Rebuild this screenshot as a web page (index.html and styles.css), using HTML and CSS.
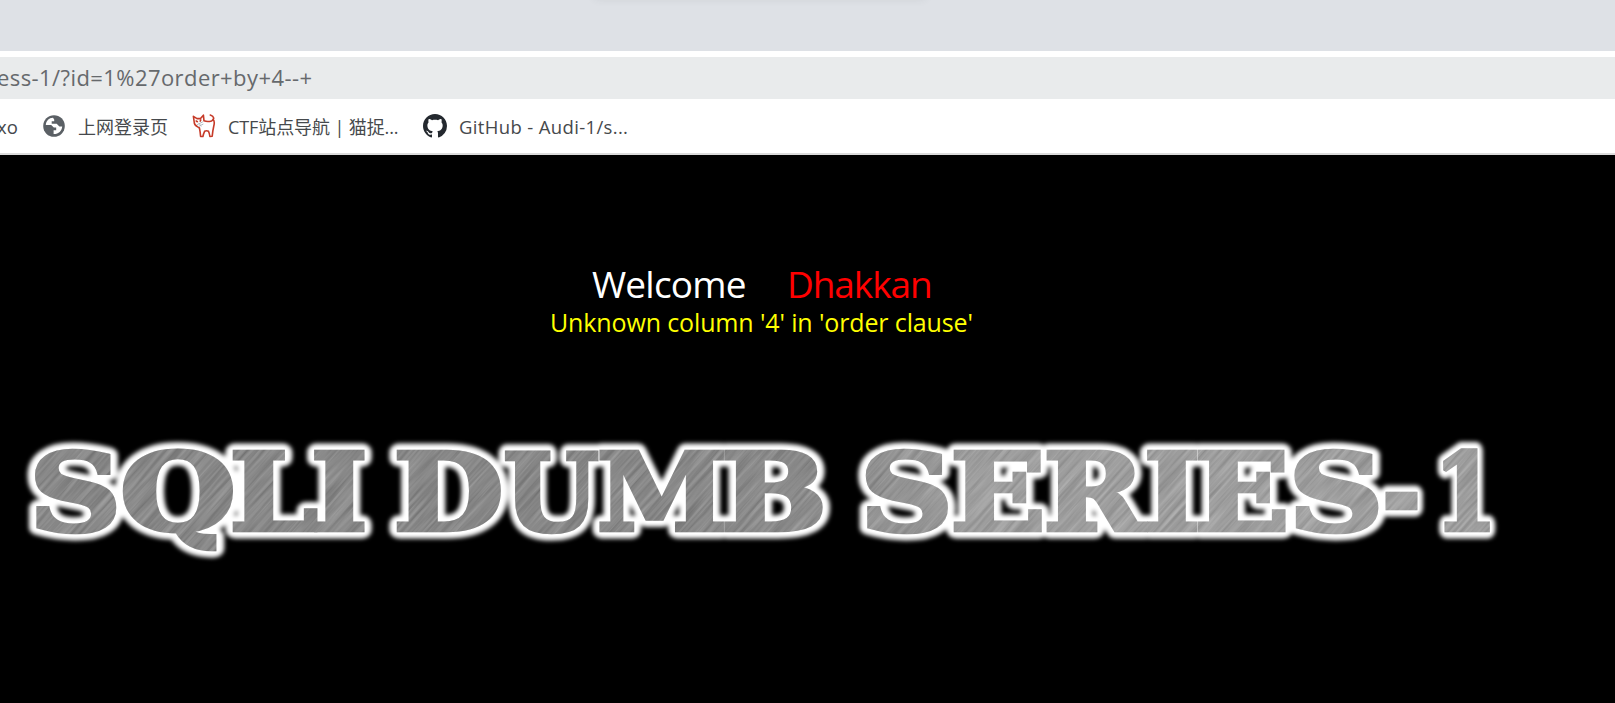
FILE: index.html
```html
<!DOCTYPE html>
<html lang="en">
<head>
<meta charset="utf-8">
<title>SQLI DUMB SERIES-1</title>
<link rel="stylesheet" href="styles.css">
</head>
<body>
<div class="tabstrip"><div class="tabstrip-shadow"></div></div>
<div class="toolbar"><div class="address"><span>ess-1/?id=1%27order+by+4--+</span></div></div>
<nav class="bookmarks">
  <span class="bm bm-cut">xo</span>
  <svg class="icon globe" viewBox="0 0 22 22"><circle cx="11" cy="11" r="10.8" fill="#5b6065"/><path d="M10 2.8C6 3 3.2 5.8 2.8 10h5.4l2.6 2.4h2.4v2.8h-2.6v3.8c4.700.2 8.400-3.200 8.600-7.600h-2.800l-2.700-2.600h-5V6.200h2.500V4.400z" fill="#fff"/></svg>
  <span class="bm bm-login">上网登录页</span>
  <svg class="icon cat" viewBox="0 0 24 24" fill="none" stroke="#c63a28" stroke-width="1.600" stroke-linecap="round" stroke-linejoin="round"><path d="M2.200 8 1.400 2.400 5 4.600h3.500L11.400 1.200l.6 5.600c2.600 1 5 .9 7.500.1 3.200-1.300 2.900-4.500-1.200-5.900M21 5.200c1.800 1.800 1.500 4.400.7 7.300-.7 3-1.200 6-1.500 9.800l-2.300.2c-.3-2-.7-3.600-1.400-5.200-1.400-.8-2.500-.8-3.900 0-.8 1.700-1.400 3.400-1.700 5.200H8.600c-.2-3.300-.6-5.800-1.200-8.600M2.200 8c0 2.500 1 3.800 3.300 4.700L7.400 14"/><path d="m4.200 7 1.200.7M8.800 5.900l-.6 1.200"/><path d="m5.500 10.500 5-2.500M6.500 12.500l4.500-2.300M7 9.200l2 3" stroke="#b4bac0" stroke-width="1"/></svg>
  <span class="bm bm-ctf">CTF站点导航 | 猫捉...</span>
  <svg class="icon github" viewBox="0 0 16 16"><path fill="#24292f" d="M8 0C3.580 0 0 3.580 0 8c0 3.540 2.290 6.530 5.470 7.590.4.070.55-.17.55-.38 0-.19-.01-.82-.01-1.490-2.010.37-2.530-.49-2.690-.94-.09-.23-.48-.94-.82-1.130-.28-.15-.68-.52-.01-.53.63-.01 1.080.58 1.230.82.72 1.210 1.870.87 2.330.66.07-.52.28-.87.51-1.070-1.780-.2-3.640-.89-3.640-3.950 0-.87.31-1.590.82-2.150-.08-.2-.36-1.020.08-2.120 0 0 .67-.21 2.200.82.64-.18 1.320-.27 2-.27s1.360.09 2 .27c1.530-1.040 2.200-.82 2.200-.82.44 1.100.16 1.920.08 2.120.51.56.82 1.270.82 2.150 0 3.070-1.870 3.750-3.650 3.950.29.25.54.73.54 1.480 0 1.070-.01 1.930-.01 2.200 0 .21.15.46.55.38A8.010 8.010 0 0 0 16 8c0-4.420-3.580-8-8-8z"/></svg>
  <span class="bm bm-git">GitHub - Audi-1/s...</span>
</nav>
<main class="page">
  <div class="welcome"><span class="greeting">Welcome</span><span class="name">Dhakkan</span></div>
  <div class="error">Unknown column '4' in 'order clause'</div>
  <svg class="banner" viewBox="0 420 1520 150" role="img">
    <defs>
      <filter id="glow" x="-5%" y="-30%" width="110%" height="160%"><feGaussianBlur stdDeviation="2.300"/></filter>
      <filter id="brushed" x="0" y="0" width="100%" height="100%" color-interpolation-filters="sRGB">
        <feTurbulence type="fractalNoise" baseFrequency="0.014 0.32" numOctaves="3" seed="4"/>
        <feColorMatrix values=".25 0 0 0 .435  .25 0 0 0 .435  .25 0 0 0 .435  0 0 0 0 1"/>
      </filter>
      <linearGradient id="tone"><stop offset="0" stop-color="#000" stop-opacity=".05"/><stop offset=".45" stop-color="#000" stop-opacity=".05"/><stop offset=".65" stop-color="#fff" stop-opacity=".13"/><stop offset="1" stop-color="#fff" stop-opacity=".13"/></linearGradient>
      <mask id="letters" maskUnits="userSpaceOnUse" x="0" y="420" width="1520" height="150"><use href="#title" fill="#fff" stroke="#fff" stroke-width="4.500" stroke-linejoin="miter" stroke-miterlimit="2"/></mask>
    </defs>
    <use href="#title" fill="#fff" stroke="#fff" stroke-width="17" stroke-linejoin="round" filter="url(#glow)"/>
    <g fill="#fff" stroke="#fff" stroke-width="8" stroke-linejoin="round"><text id="title" class="title" y="530"><tspan x="29.300" textLength="92" lengthAdjust="spacingAndGlyphs">S</tspan><tspan x="120" textLength="116" lengthAdjust="spacingAndGlyphs">Q</tspan><tspan x="229.400" textLength="88" lengthAdjust="spacingAndGlyphs">L</tspan><tspan x="311" textLength="56.500" lengthAdjust="spacingAndGlyphs">I</tspan> <tspan x="393.500" textLength="110" lengthAdjust="spacingAndGlyphs">D</tspan><tspan x="503.500" textLength="95" lengthAdjust="spacingAndGlyphs">U</tspan><tspan x="597" textLength="130" lengthAdjust="spacingAndGlyphs">M</tspan><tspan x="721" textLength="106" lengthAdjust="spacingAndGlyphs">B</tspan> <tspan x="860" textLength="93" lengthAdjust="spacingAndGlyphs">S</tspan><tspan x="950.600" textLength="95" lengthAdjust="spacingAndGlyphs">E</tspan><tspan x="1043.500" textLength="101" lengthAdjust="spacingAndGlyphs">R</tspan><tspan x="1144" textLength="56" lengthAdjust="spacingAndGlyphs">I</tspan><tspan x="1194.200" textLength="95" lengthAdjust="spacingAndGlyphs">E</tspan><tspan x="1288.500" textLength="95" lengthAdjust="spacingAndGlyphs">S</tspan><tspan x="1382.500" textLength="38" lengthAdjust="spacingAndGlyphs">-</tspan><tspan x="1434" textLength="63" lengthAdjust="spacingAndGlyphs">1</tspan></text></g>
    <g mask="url(#letters)">
      <g transform="rotate(-48 760 490)"><rect x="-60" y="-160" width="1640" height="1300" filter="url(#brushed)"/></g>
      <rect x="0" y="420" width="1520" height="150" fill="url(#tone)"/>
    </g>
  </svg>
</main>
</body>
</html>
```
FILE: styles.css
```css
* { box-sizing: border-box; }
body { margin: 0; height: 703px; overflow: hidden; background: #000; font-family: "Open Sans", "Noto Sans CJK SC", sans-serif; display: flex; flex-direction: column; }
.tabstrip { height: 51px; flex: none; background: #dee1e6; overflow: hidden; }
.tabstrip-shadow { width: 330px; height: 10px; margin: -12px 0 0 595px; box-shadow: 0 0 10px rgba(60, 64, 67, .12); }
.toolbar { height: 48px; flex: none; padding-top: 6px; background: #fff; }
.address { height: 42px; background: #e9ebec; color: #66696c; font-size: 22px; letter-spacing: .42px; line-height: 41px; white-space: pre; }
.address span { margin-left: -3px; }
.bookmarks { height: 56px; flex: none; display: flex; align-items: center; background: #fff; border-bottom: 2px solid #dcdcdc; color: #46494c; font-size: 18.500px; white-space: pre; }
.icon { flex: none; }
.bm { flex: none; }
.bm-cut { width: 46px; margin-left: -3px; }
.globe { width: 22px; height: 22px; }
.bm-login { width: 114px; margin-left: 13px; font-size: 18px; }
.cat { width: 24px; height: 24px; }
.bm-ctf { width: 195px; margin-left: 12px; font-size: 18px; letter-spacing: -.1px; }
.github { width: 24px; height: 24px; }
.bm-git { margin-left: 12px; letter-spacing: .35px; }
.page { flex: 1; color: #fff; display: flex; flex-direction: column; }
.welcome { height: 50px; margin-top: 104px; padding-left: 592px; display: flex; font-size: 37px; letter-spacing: -.8px; line-height: 50px; }
.greeting { width: 195px; }
.name { color: #f00; letter-spacing: -1.100px; }
.error { height: 34px; margin-top: -4px; padding-left: 550px; color: #ff0; font-size: 25px; letter-spacing: -.13px; line-height: 34px; white-space: pre; }
.banner { width: 1520px; height: 150px; flex: none; margin-top: 81px; }
.title { font-family: "DejaVu Serif", serif; font-weight: 700; font-size: 107px; }
```
